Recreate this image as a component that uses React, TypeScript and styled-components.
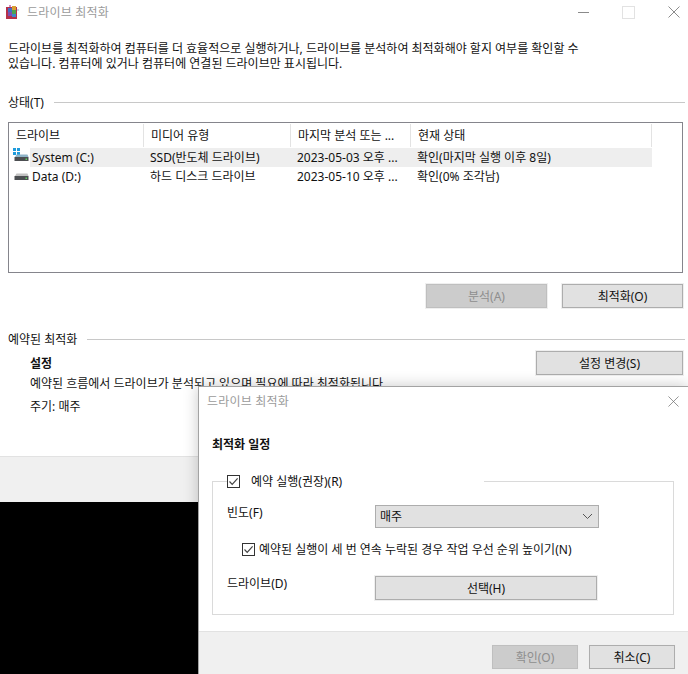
import React from 'react';
import styled, { createGlobalStyle } from 'styled-components';

const GlobalStyle = createGlobalStyle`
  html, body {
    margin: 0;
    padding: 0;
    background: #000;
  }
  body {
    font-family: "Noto Sans", "Noto Sans CJK KR", sans-serif;
    font-size: 12px;
    line-height: 15px;
    color: #111;
    overflow: hidden;
  }
`;

const Screen = styled.div`
  position: relative;
  width: 688px;
  height: 674px;
  overflow: hidden;
  display: flex;
  flex-direction: column;
  background: #000;
`;

const MainWindow = styled.div`
  height: 456px;
  background: #fff;
  display: flex;
  flex-direction: column;
`;

const TitleBar = styled.div`
  height: 24px;
  display: flex;
  align-items: center;
  padding-left: 5px;
  gap: 6px;
`;

const TitleText = styled.span`
  color: #9b9b9b;
  letter-spacing: 0.2px;
`;

const WindowControls = styled.div`
  margin-left: auto;
  display: flex;
  align-items: center;
  gap: 33px;
  padding-right: 8px;
`;

const Intro = styled.p`
  margin: 17px 0 0;
  padding: 0 8px;
`;

const SectionHead = styled.div<{ $top: number }>`
  display: flex;
  align-items: center;
  gap: 10px;
  margin: ${(p) => p.$top}px 3px 0 8px;
`;

const SectionRule = styled.div`
  flex: 1;
  height: 1px;
  background: #c8c8c8;
`;

const DriveTable = styled.div`
  margin: 12px 5px 0 8px;
  height: 151px;
  border: 1px solid #85858c;
  box-sizing: border-box;
  padding: 1px 0 0;
`;

const HeaderRow = styled.div`
  display: grid;
  grid-template-columns: 135px 147px 120px 241px;
  height: 24px;
`;

const HeaderCell = styled.div`
  display: flex;
  align-items: center;
  padding-left: 7px;
  border-right: 1px solid #e3e3e3;
  margin-bottom: 1px;
`;

const DriveRow = styled.div`
  display: flex;
  height: 19px;
`;

const DriveIconCell = styled.div`
  width: 21px;
  flex: none;
  padding-left: 4px;
  box-sizing: border-box;
  display: flex;
  align-items: flex-start;
`;

const DriveCells = styled.div<{ $selected?: boolean }>`
  display: grid;
  grid-template-columns: 114px 147px 120px 241px;
  background: ${(p) => (p.$selected ? '#eeeeee' : 'transparent')};
`;

const DriveCell = styled.div`
  display: flex;
  align-items: center;
  padding-left: 6px;
  white-space: nowrap;
  &:first-child {
    padding-left: 2px;
  }
`;

const ButtonRow = styled.div`
  display: flex;
  justify-content: flex-end;
  gap: 15px;
  margin: 11px 5px 0 0;
`;

const Button = styled.button<{ $width: number }>`
  width: ${(p) => p.$width}px;
  height: 24px;
  padding: 0;
  box-sizing: border-box;
  font: inherit;
  color: #111;
  background: #e1e1e1;
  border: 1px solid #adadad;
  outline: 1px solid #efefef;
  &:disabled {
    color: #8e8e8e;
    background: #cccccc;
    border-color: #bfbfbf;
  }
`;

const ScheduleBody = styled.div`
  display: flex;
  flex-direction: column;
  padding-left: 30px;
`;

const SettingsRow = styled.div`
  display: flex;
  align-items: center;
  justify-content: space-between;
  padding-right: 5px;
  margin-top: 4px;
`;

const Strong = styled.span`
  font-weight: 700;
`;

const ScheduleText = styled.div`
  margin-top: 1px;
  white-space: nowrap;
`;

const CycleText = styled.div`
  margin-top: 8px;
`;

const FooterBand = styled.div`
  height: 45px;
  background: #f0f0f0;
  border-top: 1px solid #e2e2e2;
`;

const Dialog = styled.div`
  position: absolute;
  left: 198px;
  top: 386px;
  width: 490px;
  height: 288px;
  box-sizing: border-box;
  background: #fff;
  border-left: 1px solid #a3a3a3;
  border-top: 1px solid #a3a3a3;
  box-shadow: 0 0 14px rgba(0, 0, 0, 0.22);
  display: flex;
  flex-direction: column;
`;

const DialogTitleBar = styled.div`
  height: 28px;
  display: flex;
  align-items: center;
  justify-content: space-between;
  padding: 0 9px 0 8px;
  flex: none;
`;

const DialogHeading = styled.div`
  margin: 22px 0 0 13px;
  font-weight: 700;
`;

const Group = styled.fieldset`
  margin: 22px 14px 0 13px;
  padding: 0 14px;
  height: 141px;
  box-sizing: border-box;
  border: 1px solid #dadada;
  display: flex;
  flex-direction: column;
`;

const Legend = styled.legend`
  margin-left: 0;
  padding: 0;
  width: 257px;
  height: 15px;
  display: flex;
  align-items: center;
  gap: 11px;
`;

const CheckBox = styled.span`
  width: 13px;
  height: 13px;
  flex: none;
  box-sizing: border-box;
  border: 1px solid #333;
  background: #fff;
  display: inline-flex;
  align-items: center;
  justify-content: center;
`;

const FieldRow = styled.div<{ $top: number }>`
  display: flex;
  align-items: flex-start;
  margin-top: ${(p) => p.$top}px;
`;

const FieldLabel = styled.span`
  width: 148px;
  flex: none;
`;

const SelectBox = styled.div`
  width: 224px;
  height: 23px;
  box-sizing: border-box;
  border: 1px solid #adadad;
  background: #e1e1e1;
  display: flex;
  align-items: center;
  justify-content: space-between;
  padding: 0 5px 0 4px;
`;

const PriorityRow = styled.div`
  display: flex;
  align-items: center;
  gap: 4px;
  margin: 14px 0 0 15px;
  white-space: nowrap;
`;

const DialogFooter = styled.div`
  margin-top: auto;
  height: 43px;
  box-sizing: border-box;
  background: #f0f0f0;
  border-top: 1px solid #e2e2e2;
  display: flex;
  justify-content: flex-end;
  align-items: flex-start;
  gap: 11px;
  padding: 13px 13px 0 0;
`;

const CloseIcon = ({ size }: { size: number }) => (
  <svg width={size} height={size} viewBox="0 0 12 12" fill="none" stroke="#6f6f6f" strokeWidth="0.8">
    <path d="M0.5 0.5L11.5 11.5M11.5 0.5L0.5 11.5" />
  </svg>
);

const CheckMark = () => (
  <svg width="11" height="11" viewBox="0 0 11 11" fill="none" stroke="#444" strokeWidth="1.2">
    <path d="M1.5 5.5L4.2 8.3L9.6 2.4" />
  </svg>
);

const AppIcon = () => (
  <svg width="16" height="16" viewBox="0 0 16 16">
    <rect x="1" y="3" width="11" height="12" fill="#b5304a" />
    <rect x="3" y="4" width="4" height="4" fill="#3f6fc4" />
    <rect x="7" y="2" width="4" height="4" fill="#d9a032" />
    <rect x="7" y="6" width="4" height="4" fill="#4fa34f" />
    <rect x="3" y="8" width="4" height="4" fill="#7b4fb0" />
    <rect x="7" y="10" width="4" height="3" fill="#3d86c9" />
    <rect x="12" y="5" width="2" height="2" fill="#c9d8ee" />
    <rect x="4" y="1" width="2" height="2" fill="#d28ac2" />
  </svg>
);

const DriveIcon = ({ system }: { system?: boolean }) => (
  <svg width="16" height="16" viewBox="0 0 16 16">
    {system && (
      <g fill="#1e9bdc">
        <rect x="0" y="0" width="3" height="3" />
        <rect x="4" y="0" width="3" height="3" />
        <rect x="0" y="4" width="3" height="3" />
        <rect x="4" y="4" width="3" height="3" />
      </g>
    )}
    <path d="M2 9L3.5 6.5H14.5L15.5 9Z" fill={system ? '#8fb4c8' : '#c2c2c2'} />
    <rect x="1.5" y="9" width="14" height="4" fill="#4c4f52" />
    <rect x="12.5" y="10.5" width="1.5" height="1.5" fill="#5fd35f" />
  </svg>
);

export default function App() {
  return (
    <Screen>
      <GlobalStyle />
      <MainWindow>
        <TitleBar>
          <AppIcon />
          <TitleText>드라이브 최적화</TitleText>
          <WindowControls>
            <svg width="11" height="12" viewBox="0 0 11 12" stroke="#8a8a8a" fill="none">
              <path d="M0 6.5H11" />
            </svg>
            <svg width="13" height="13" viewBox="0 0 13 13" stroke="#e2e2e2" fill="none">
              <rect x="0.5" y="0.5" width="12" height="12" />
            </svg>
            <CloseIcon size={12} />
          </WindowControls>
        </TitleBar>
        <Intro>
          드라이브를 최적화하여 컴퓨터를 더 효율적으로 실행하거나, 드라이브를 분석하여 최적화해야 할지 여부를 확인할 수
          <br />
          있습니다. 컴퓨터에 있거나 컴퓨터에 연결된 드라이브만 표시됩니다.
        </Intro>
        <SectionHead $top={24}>
          <span>상태(T)</span>
          <SectionRule />
        </SectionHead>
        <DriveTable>
          <HeaderRow>
            <HeaderCell>드라이브</HeaderCell>
            <HeaderCell>미디어 유형</HeaderCell>
            <HeaderCell>마지막 분석 또는 ...</HeaderCell>
            <HeaderCell>현재 상태</HeaderCell>
          </HeaderRow>
          <DriveRow>
            <DriveIconCell>
              <DriveIcon system />
            </DriveIconCell>
            <DriveCells $selected>
              <DriveCell>System (C:)</DriveCell>
              <DriveCell>SSD(반도체 드라이브)</DriveCell>
              <DriveCell>2023-05-03 오후 ...</DriveCell>
              <DriveCell>확인(마지막 실행 이후 8일)</DriveCell>
            </DriveCells>
          </DriveRow>
          <DriveRow>
            <DriveIconCell>
              <DriveIcon />
            </DriveIconCell>
            <DriveCells>
              <DriveCell>Data (D:)</DriveCell>
              <DriveCell>하드 디스크 드라이브</DriveCell>
              <DriveCell>2023-05-10 오후 ...</DriveCell>
              <DriveCell>확인(0% 조각남)</DriveCell>
            </DriveCells>
          </DriveRow>
        </DriveTable>
        <ButtonRow>
          <Button $width={121} disabled>
            분석(A)
          </Button>
          <Button $width={121}>최적화(O)</Button>
        </ButtonRow>
        <SectionHead $top={24}>
          <span>예약된 최적화</span>
          <SectionRule />
        </SectionHead>
        <ScheduleBody>
          <SettingsRow>
            <Strong>설정</Strong>
            <Button $width={147}>설정 변경(S)</Button>
          </SettingsRow>
          <ScheduleText>예약된 흐름에서 드라이브가 분석되고 있으며 필요에 따라 최적화됩니다.</ScheduleText>
          <CycleText>주기: 매주</CycleText>
        </ScheduleBody>
      </MainWindow>
      <FooterBand />
      <Dialog>
        <DialogTitleBar>
          <TitleText>드라이브 최적화</TitleText>
          <CloseIcon size={11} />
        </DialogTitleBar>
        <DialogHeading>최적화 일정</DialogHeading>
        <Group>
          <Legend>
            <CheckBox>
              <CheckMark />
            </CheckBox>
            예약 실행(권장)(R)
          </Legend>
          <FieldRow $top={16}>
            <FieldLabel>빈도(F)</FieldLabel>
            <SelectBox>
              매주
              <svg width="11" height="7" viewBox="0 0 11 7" fill="none" stroke="#555">
                <path d="M1 1L5.5 5.5L10 1" />
              </svg>
            </SelectBox>
          </FieldRow>
          <PriorityRow>
            <CheckBox>
              <CheckMark />
            </CheckBox>
            예약된 실행이 세 번 연속 누락된 경우 작업 우선 순위 높이기(N)
          </PriorityRow>
          <FieldRow $top={19}>
            <FieldLabel>드라이브(D)</FieldLabel>
            <Button $width={222}>선택(H)</Button>
          </FieldRow>
        </Group>
        <DialogFooter>
          <Button $width={86} disabled>
            확인(O)
          </Button>
          <Button $width={86}>취소(C)</Button>
        </DialogFooter>
      </Dialog>
    </Screen>
  );
}
